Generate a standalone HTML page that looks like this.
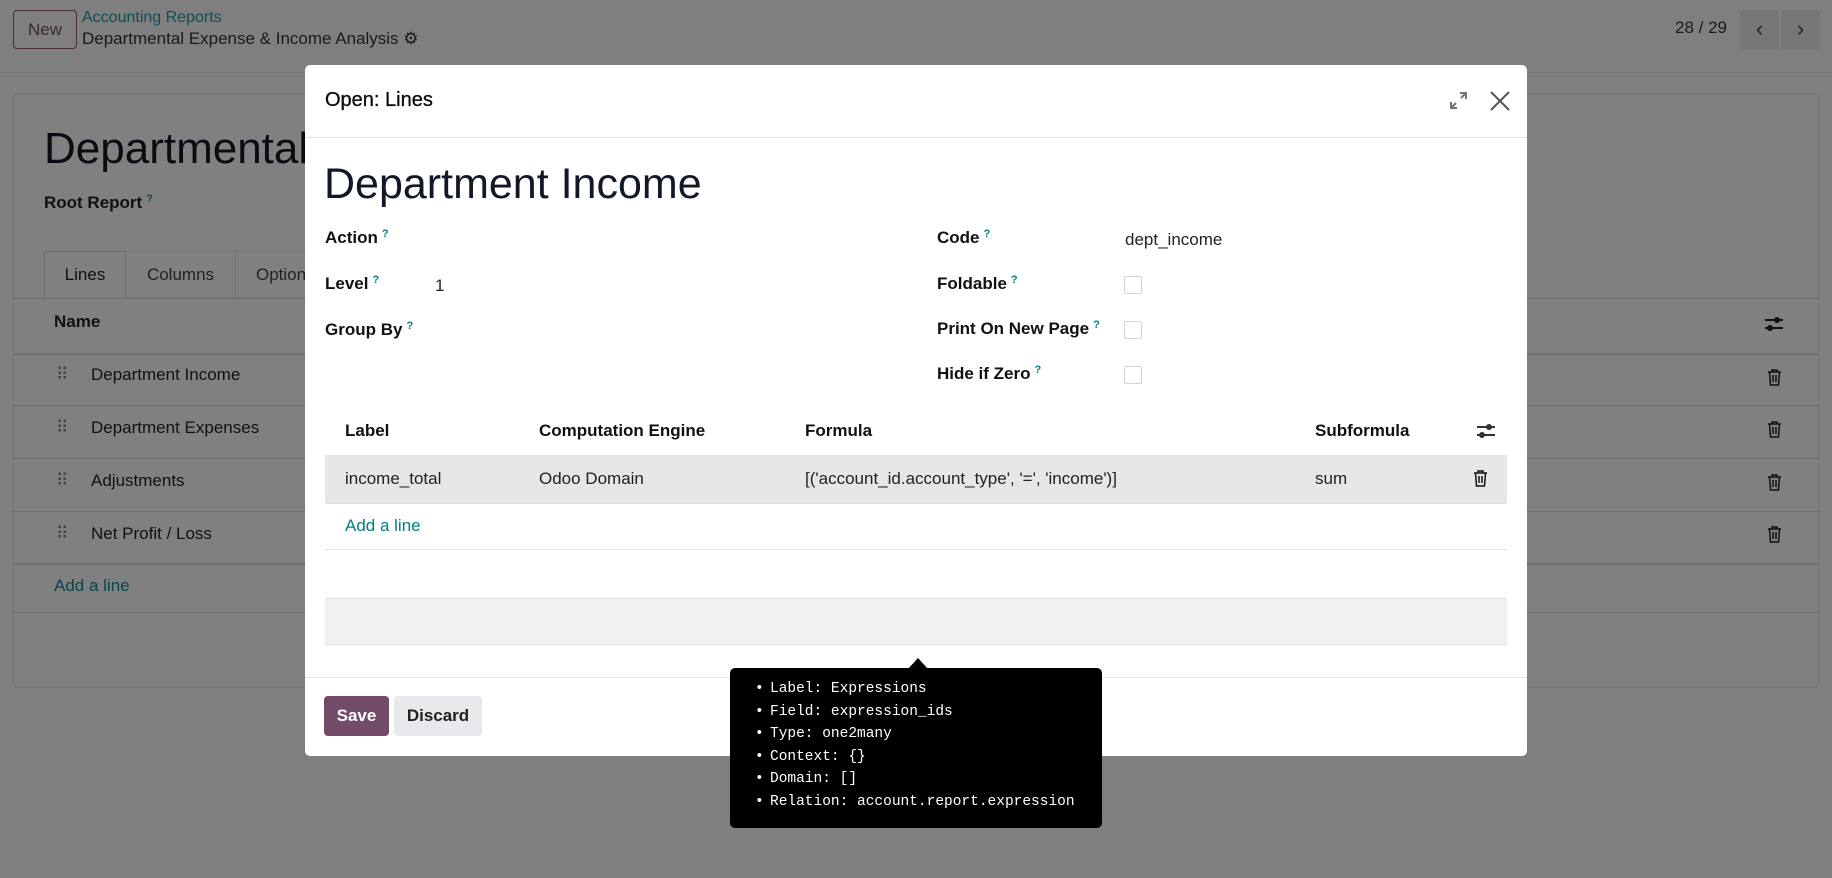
<!DOCTYPE html>
<html><head><meta charset="utf-8"><style>
*{box-sizing:border-box;margin:0;padding:0}
body{width:1832px;height:878px;position:relative;overflow:hidden;background:#7f7f7f;font-family:"Liberation Sans",sans-serif;color:#111;}
.a{position:absolute;white-space:nowrap}
.q{color:#017e84;font-size:11px;vertical-align:top;margin-left:4px}
.bq{color:#0a4a50;font-size:11px;vertical-align:top;margin-left:4px}
.hl{position:absolute;height:1px;background:#6f6f6f}
.ml{position:absolute;height:1px;background:#dee2e6}
.cb{position:absolute;width:18px;height:18px;border:1px solid #ced4da;border-radius:2px;background:#fff}
.mono{font-family:"Liberation Mono",monospace}
.tt div{position:relative;padding-left:15px}
.tt div:before{content:"•";position:absolute;left:0}
</style></head><body>
<div class="hl" style="left:0;top:72px;width:1832px;background:#767676"></div>
<div class="a" style="left:13px;top:10px;width:64px;height:39px;border:1px solid #4a2c3f;border-radius:4px;font-size:17px;color:#3a2a35;text-align:center;line-height:37px">New</div>
<div class="a" style="left:82px;top:9px;font-size:16px;color:#0f4f53">Accounting Reports</div>
<div class="a" style="left:82px;top:29px;font-size:17px;color:#1a1a1a">Departmental Expense &amp; Income Analysis <span style="font-size:17px">⚙</span></div>
<div class="a" style="left:1675px;top:18px;font-size:17px;color:#1a1a1a">28 / 29</div>
<div class="a" style="left:1740px;top:10px;width:39px;height:40px;background:#767676;border-radius:4px 0 0 4px;font-size:22px;text-align:center;line-height:38px;color:#222">‹</div>
<div class="a" style="left:1781px;top:10px;width:39px;height:40px;background:#767676;border-radius:0 4px 4px 0;font-size:22px;text-align:center;line-height:38px;color:#222">›</div>
<div class="a" style="left:13px;top:94px;width:1806px;height:594px;border:1px solid #737373;border-radius:4px;background:#808080"></div>
<div class="a" style="left:44px;top:124px;font-size:44px;color:#0b0b14">Departmental</div>
<div class="a" style="left:44px;top:193px;font-size:17px;font-weight:bold;color:#111">Root Report<span class="bq">?</span></div>
<div class="a" style="left:44px;top:251px;width:82px;height:48px;border:1px solid #6a6a6a;border-bottom:none;font-size:17px;text-align:center;line-height:46px;background:#808080">Lines</div>
<div class="a" style="left:126px;top:251px;width:110px;height:47px;border:1px solid #737373;border-left:none;font-size:17px;text-align:center;line-height:46px;color:#222">Columns</div>
<div class="a" style="left:236px;top:251px;width:80px;height:47px;border:1px solid #737373;border-left:none;font-size:17px;line-height:46px;color:#222;padding-left:20px">Option</div>
<div class="hl" style="left:13px;top:298px;width:1806px"></div>
<div class="a" style="left:54px;top:312px;font-size:17px;font-weight:bold;color:#111">Name</div>
<div class="hl" style="left:13px;top:353px;width:1806px;height:2px"></div>
<div class="a" style="left:56px;top:365px;font-size:17px;color:#444">⠿</div><div class="a" style="left:91px;top:365px;font-size:17px">Department Income</div>
<div class="hl" style="left:13px;top:405px;width:1806px"></div>
<div class="a" style="left:56px;top:418px;font-size:17px;color:#444">⠿</div><div class="a" style="left:91px;top:418px;font-size:17px">Department Expenses</div>
<div class="hl" style="left:13px;top:458px;width:1806px"></div>
<div class="a" style="left:56px;top:471px;font-size:17px;color:#444">⠿</div><div class="a" style="left:91px;top:471px;font-size:17px">Adjustments</div>
<div class="hl" style="left:13px;top:511px;width:1806px"></div>
<div class="a" style="left:56px;top:524px;font-size:17px;color:#444">⠿</div><div class="a" style="left:91px;top:524px;font-size:17px">Net Profit / Loss</div>
<div class="hl" style="left:13px;top:563px;width:1806px;height:2px"></div>
<div class="a" style="left:54px;top:576px;font-size:17px;color:#0b4548">Add a line</div>
<div class="hl" style="left:13px;top:612px;width:1806px"></div>
<svg class="a" style="left:1763px;top:314px" width="22" height="20" viewBox="0 0 22 20"><path d="M2 6h18M2 14h18" stroke="#111" stroke-width="2"/><circle cx="14" cy="6" r="3" fill="#111"/><circle cx="7" cy="14" r="3" fill="#111"/></svg>
<svg class="a" style="left:1767px;top:369px" width="15" height="17" viewBox="0 0 15 17"><path d="M1 3h13M5 3V1h5v2M2.5 3l1 13h8l1-13M6 6v7M9 6v7" stroke="#111" stroke-width="1.5" fill="none"/></svg>
<svg class="a" style="left:1767px;top:421px" width="15" height="17" viewBox="0 0 15 17"><path d="M1 3h13M5 3V1h5v2M2.5 3l1 13h8l1-13M6 6v7M9 6v7" stroke="#111" stroke-width="1.5" fill="none"/></svg>
<svg class="a" style="left:1767px;top:474px" width="15" height="17" viewBox="0 0 15 17"><path d="M1 3h13M5 3V1h5v2M2.5 3l1 13h8l1-13M6 6v7M9 6v7" stroke="#111" stroke-width="1.5" fill="none"/></svg>
<svg class="a" style="left:1767px;top:526px" width="15" height="17" viewBox="0 0 15 17"><path d="M1 3h13M5 3V1h5v2M2.5 3l1 13h8l1-13M6 6v7M9 6v7" stroke="#111" stroke-width="1.5" fill="none"/></svg>

<div class="a" style="left:305px;top:65px;width:1222px;height:691px;background:#fff;border-radius:5px"></div>
<div class="a" style="left:325px;top:89px;font-size:20px;color:#0b0b0b;-webkit-text-stroke:0.3px #0b0b0b">Open: Lines</div>
<svg class="a" style="left:1450px;top:92px" width="17" height="17" viewBox="0 0 17 17"><path d="M10 1h6v6M16 1l-5 5M7 16H1v-6M1 16l5-5" stroke="#6c757d" stroke-width="2" fill="none"/></svg>
<svg class="a" style="left:1490px;top:91px" width="20" height="20" viewBox="0 0 20 20"><path d="M1 1l18 18M19 1L1 19" stroke="#555" stroke-width="2"/></svg>
<div class="ml" style="left:305px;top:137px;width:1222px"></div>
<div class="a" style="left:324px;top:160px;font-size:43px;color:#111827">Department Income</div>
<div class="a" style="left:325px;top:228px;font-size:17px;font-weight:bold">Action<span class="q">?</span></div>
<div class="a" style="left:325px;top:274px;font-size:17px;font-weight:bold">Level<span class="q">?</span></div>
<div class="a" style="left:435px;top:276px;font-size:17px;color:#222">1</div>
<div class="a" style="left:325px;top:320px;font-size:17px;font-weight:bold">Group By<span class="q">?</span></div>
<div class="a" style="left:937px;top:228px;font-size:17px;font-weight:bold">Code<span class="q">?</span></div>
<div class="a" style="left:1125px;top:230px;font-size:17px;color:#222">dept_income</div>
<div class="a" style="left:937px;top:274px;font-size:17px;font-weight:bold">Foldable<span class="q">?</span></div>
<div class="a" style="left:937px;top:319px;font-size:17px;font-weight:bold">Print On New Page<span class="q">?</span></div>
<div class="a" style="left:937px;top:364px;font-size:17px;font-weight:bold">Hide if Zero<span class="q">?</span></div>
<div class="cb" style="left:1124px;top:276px"></div>
<div class="cb" style="left:1124px;top:321px"></div>
<div class="cb" style="left:1124px;top:366px"></div>
<div class="a" style="left:345px;top:421px;font-size:17px;font-weight:bold">Label</div>
<div class="a" style="left:539px;top:421px;font-size:17px;font-weight:bold">Computation Engine</div>
<div class="a" style="left:805px;top:421px;font-size:17px;font-weight:bold">Formula</div>
<div class="a" style="left:1315px;top:421px;font-size:17px;font-weight:bold">Subformula</div>
<svg class="a" style="left:1475px;top:421px" width="22" height="20" viewBox="0 0 22 20"><path d="M2 6h18M2 14h18" stroke="#333" stroke-width="2"/><circle cx="14" cy="6" r="3" fill="#333"/><circle cx="7" cy="14" r="3" fill="#333"/></svg>
<div class="a" style="left:325px;top:455px;width:1182px;height:48px;background:#e6e6e6;border-top:1px solid #dee2e6"></div>
<div class="a" style="left:345px;top:469px;font-size:17px;color:#222">income_total</div>
<div class="a" style="left:539px;top:469px;font-size:17px;color:#222">Odoo Domain</div>
<div class="a" style="left:805px;top:469px;font-size:17px;color:#222">[('account_id.account_type', '=', 'income')]</div>
<div class="a" style="left:1315px;top:469px;font-size:17px;color:#222">sum</div>
<svg class="a" style="left:1473px;top:470px" width="15" height="17" viewBox="0 0 15 17"><path d="M1 3h13M5 3V1h5v2M2.5 3l1 13h8l1-13M6 6v7M9 6v7" stroke="#111" stroke-width="1.5" fill="none"/></svg>
<div class="ml" style="left:325px;top:503px;width:1182px"></div>
<div class="a" style="left:345px;top:516px;font-size:17px;color:#017e84">Add a line</div>
<div class="ml" style="left:325px;top:549px;width:1182px"></div>
<div class="a" style="left:325px;top:598px;width:1182px;height:47px;background:#f0f0f0;border-top:1px solid #dee2e6;border-bottom:1px solid #dee2e6"></div>
<div class="ml" style="left:305px;top:677px;width:1222px"></div>
<div class="a" style="left:324px;top:696px;width:65px;height:40px;background:#714b67;border-radius:4px;color:#fff;font-size:17px;font-weight:bold;text-align:center;line-height:40px">Save</div>
<div class="a" style="left:394px;top:696px;width:88px;height:40px;background:#e7e9ed;border-radius:4px;color:#222;font-size:17px;font-weight:bold;text-align:center;line-height:40px">Discard</div>

<div class="a" style="left:908px;top:658px;width:0;height:0;border-left:10px solid transparent;border-right:10px solid transparent;border-bottom:11px solid #000"></div>
<div class="a mono tt" style="left:730px;top:668px;width:372px;height:160px;background:#000;border-radius:5px;color:#fff;font-size:14.5px;line-height:22.5px;padding:10px 0 0 25px">
<div>Label: Expressions</div>
<div>Field: expression_ids</div>
<div>Type: one2many</div>
<div>Context: {}</div>
<div>Domain: []</div>
<div>Relation: account.report.expression</div>
</div>
</body></html>
